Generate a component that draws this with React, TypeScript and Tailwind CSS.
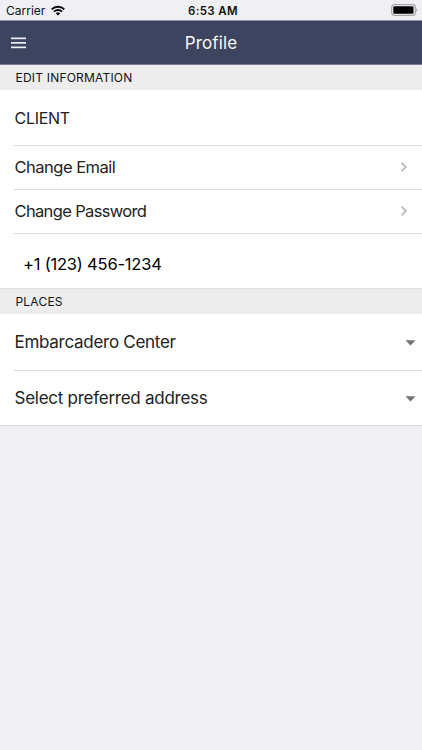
import type { ReactNode } from "react";

function Wifi() {
  return (
    <svg width="14" height="11" viewBox="0 0 14 11" fill="none" stroke="#080808">
      <path d="M.8 4.3a9 9 0 0 1 12.4 0" strokeWidth="2" />
      <path d="M3 6.6a5.8 5.8 0 0 1 8 0" strokeWidth="1.8" />
      <path d="M7 10.6 4.8 8.4a3.2 3.2 0 0 1 4.4 0Z" fill="#080808" stroke="none" />
    </svg>
  );
}

function Battery() {
  return (
    <svg width="27" height="12" viewBox="0 0 27 12">
      <rect x=".7" y=".7" width="23.6" height="10.6" rx="2.6" fill="#f4f4f6" stroke="#a6a6a8" strokeWidth="1.2" />
      <rect x="2.3" y="2.3" width="20.2" height="7.4" rx="1" fill="#000" />
      <path d="M25.3 4.1c1.5.5 1.5 3.3 0 3.8Z" fill="#a0a0a3" />
    </svg>
  );
}

function Chevron() {
  return (
    <svg className="mr-[14px] mb-px" width="8" height="12" viewBox="0 0 8 12" fill="none" stroke="#c0c0c3" strokeWidth="2">
      <path d="m1.5 1.8 4.3 4.2-4.3 4.2" />
    </svg>
  );
}

function Caret() {
  return (
    <svg className="mr-[6px]" width="11" height="6" viewBox="0 0 11 6">
      <path d="M.4.3h10.2L5.5 5.5Z" fill="#747474" />
    </svg>
  );
}

function SectionTitle({ children, className }: { children: ReactNode; className: string }) {
  return (
    <h2 className={`flex items-center bg-[#ededed] pl-[15.5px] text-[12px] font-normal text-[#111] ${className}`}>
      {children}
    </h2>
  );
}

function Row({ children, icon, className }: { children: ReactNode; icon?: ReactNode; className: string }) {
  return (
    <div className={`ml-[14px] flex items-center justify-between border-[#dcdcde] text-[#222] ${className}`}>
      {children}
      {icon}
    </div>
  );
}

export default function App() {
  return (
    <div className="h-[750px] w-[422px] overflow-hidden bg-[#efeff4] font-['Inter',sans-serif] whitespace-nowrap">
      <div className="grid h-5 grid-cols-3 items-center text-[12px] text-[#111]">
        <div className="flex items-center gap-[6px] pl-[6px] pt-[1px]">
          <span className="w-[39px]">Carrier</span>
          <Wifi />
        </div>
        <div className="pl-[4px] pt-[3px] text-center text-[11.5px] font-semibold tracking-[0.35px]">6:53 AM</div>
        <div className="flex justify-end pr-[4px]">
          <Battery />
        </div>
      </div>
      <header className="grid h-[45px] grid-cols-[1fr_auto_1fr] items-center border-t border-b border-t-[#8d94a8] border-b-[#777e94] bg-[#3c4460]">
        <svg className="ml-[11px]" width="15" height="12" viewBox="0 0 15 12" fill="#eef0f5">
          <rect y=".5" width="15" height="1.7" />
          <rect y="5" width="15" height="1.7" />
          <rect y="9.5" width="15" height="1.7" />
        </svg>
        <h1 className="pt-[2px] text-[17px] font-normal tracking-[0.1px] text-[#f8f9fb]">Profile</h1>
      </header>
      <SectionTitle className="h-[25px] tracking-[0.2px]">EDIT INFORMATION</SectionTitle>
      <div className="bg-white">
        <Row className="h-[56px] border-b pt-[1px] pl-[0.5px] text-[16px] tracking-[-0.3px]">CLIENT</Row>
        <Row className="h-[44px] border-b pl-[0.5px] text-[16.5px] tracking-[-0.5px]" icon={<Chevron />}>Change Email</Row>
        <Row className="h-[44px] border-b pl-[0.5px] text-[16.5px] tracking-[-0.65px]" icon={<Chevron />}>Change Password</Row>
        <Row className="h-[54px] pt-[6px] pl-[9px] text-[16.5px] tracking-[-0.2px] text-black">+1 (123) 456-1234</Row>
      </div>
      <SectionTitle className="h-[26px] border-t border-[#dfdfdf] tracking-[0.2px]">PLACES</SectionTitle>
      <div className="border-b border-[#d8d8dc] bg-white">
        <Row className="h-[57px] border-b pt-[2px] pl-[0.5px] text-[17px] tracking-[-0.28px]" icon={<Caret />}>Embarcadero Center</Row>
        <Row className="h-[54px] pt-[2px] pl-[0.5px] text-[17px] tracking-[-0.26px]" icon={<Caret />}>Select preferred address</Row>
      </div>
    </div>
  );
}
